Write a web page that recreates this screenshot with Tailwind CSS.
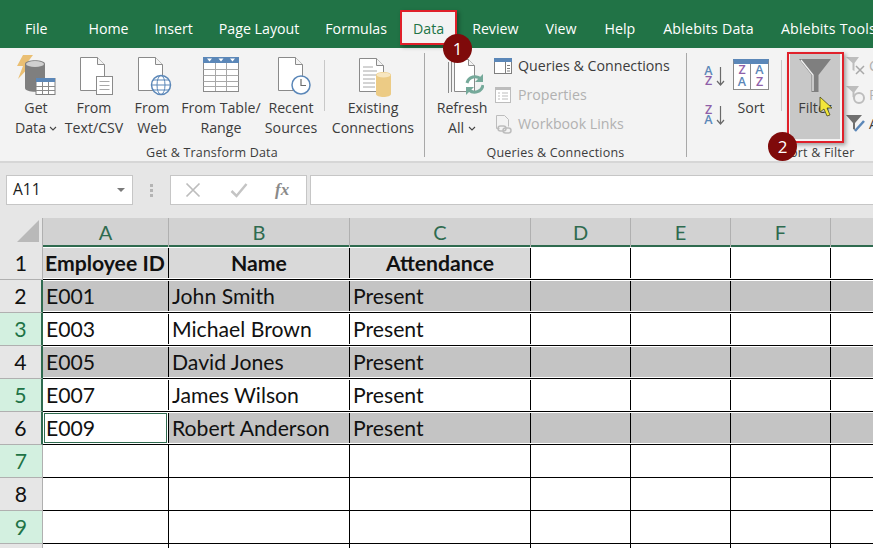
<!DOCTYPE html>
<html lang="en">
<head>
<meta charset="UTF-8">
<title>Excel Data Filter</title>
<script src="https://cdn.jsdelivr.net/npm/@tailwindcss/browser@4"></script>
</head>
<body class="bg-white">
<div class="relative w-[873px] h-[548px] overflow-hidden font-['Open_Sans',sans-serif] text-[#3c3c3c]">

  <!-- tabs -->
  <div class="h-[48px] bg-[#217346] text-white text-[14.2px] flex items-center pt-[9px] whitespace-nowrap">
    <span class="ml-[25px] mr-[41px]">File</span>
    <div class="flex gap-[26px]">
      <span>Home</span>
      <span>Insert</span>
      <span>Page Layout</span>
      <span>Formulas</span>
      <span class="relative text-[#217346]">
        <span class="absolute -left-[13px] -right-[13px] -top-[8px] h-[35px] bg-[#f3f3f3] border-[2.5px] border-[#e0202a] shadow-[2px_2px_4px_rgba(0,0,0,0.35)]"></span>
        <span class="relative">Data</span>
      </span>
      <span class="ml-[2px]">Review</span>
      <span class="ml-[1px]">View</span>
      <span class="ml-[2px]">Help</span>
      <span class="ml-[2px] tracking-[0.2px]">Ablebits Data</span>
      <span class="ml-[1px] tracking-[0.2px]">Ablebits Tools</span>
    </div>
  </div>

  <!-- ribbon -->
  <div class="h-[115px] bg-[#f3f3f3] border-b-2 border-[#d6d6d6] flex text-[14.2px] leading-[20px] whitespace-nowrap">

    <!-- get & transform -->
    <div class="w-[425px] shrink-0 h-[104px] mt-[5px] border-r border-[#a8a8a8] flex flex-col">
      <div class="h-[93px] shrink-0 pl-[7px] flex">
        <div class="w-[58px] flex flex-col items-center">
          <svg class="h-[45px] w-[44px]" viewBox="0 0 44 45">
            <path d="M9 2h10l-6 8h6L4 26l5-13H3z" fill="#eabf73"/>
            <path d="M11 11c0-5 20-5 20 0v24c0 5-20 5-20 0z" fill="#7f7f7f"/>
            <ellipse cx="21" cy="11" rx="9" ry="3" fill="#d0d0d0"/>
            <rect x="22" y="25.500" width="19" height="16" fill="#fff" stroke="#7f7f7f"/>
            <rect x="22" y="25" width="19" height="4" fill="#5b87b8"/>
            <path d="M22 33.500h19M22 37.500h19M28.500 29v12M34.500 29v12" stroke="#8a8a8a"/>
          </svg>
          <span>Get</span>
          <span class="flex items-center gap-[3px]">Data
            <svg class="w-[8px] h-[5px]" viewBox="0 0 8 5"><path d="M1 1l3 3 3-3" fill="none" stroke="#444" stroke-width="1.100"/></svg>
          </span>
        </div>
        <div class="w-[58px] flex flex-col items-center">
          <svg class="h-[45px] w-[44px]" viewBox="0 0 44 45">
            <path d="M8.500 4.500h17l7 7v26h-24z" fill="#fff" stroke="#8a8a8a"/>
            <path d="M25.500 4.500v7h7" fill="#f3f3f3" stroke="#8a8a8a"/>
            <rect x="24.500" y="23.500" width="16" height="18" fill="#fff" stroke="#8a8a8a"/>
            <path d="M27.500 28.500h10M27.500 32.500h10M27.500 36.500h10" stroke="#a8a8a8"/>
          </svg>
          <span>From</span>
          <span>Text/CSV</span>
        </div>
        <div class="w-[58px] flex flex-col items-center">
          <svg class="h-[45px] w-[44px]" viewBox="0 0 44 45">
            <path d="M8.500 4.500h17l7 7v26h-24z" fill="#fff" stroke="#8a8a8a"/>
            <path d="M25.500 4.500v7h7" fill="#f3f3f3" stroke="#8a8a8a"/>
            <circle cx="31" cy="32" r="9.500" fill="#fff" stroke="#5b87b8" stroke-width="1.500"/>
            <ellipse cx="31" cy="32" rx="4" ry="9.500" fill="none" stroke="#5b87b8"/>
            <path d="M21.500 32h19M23 27h16M23 37h16" stroke="#5b87b8"/>
          </svg>
          <span>From</span>
          <span>Web</span>
        </div>
        <div class="w-[80px] flex flex-col items-center">
          <svg class="h-[45px] w-[44px]" viewBox="0 0 44 45">
            <rect x="4.500" y="4.500" width="35" height="34" fill="#fff" stroke="#8a8a8a"/>
            <rect x="4" y="4" width="36" height="6" fill="#5b87b8"/>
            <path d="M4.500 16.500h35M4.500 22.500h35M4.500 28.500h35M4.500 33.500h35M16.500 10v28M27.500 10v28" stroke="#a8a8a8"/>
            <path d="M8 5.500h5l-2.500 3zM19.500 5.500h5l-2.500 3zM31 5.500h5l-2.500 3z" fill="#fff"/>
          </svg>
          <span>From Table/</span>
          <span>Range</span>
        </div>
        <div class="w-[60px] flex flex-col items-center">
          <svg class="h-[45px] w-[44px]" viewBox="0 0 44 45">
            <path d="M9.500 4.500h17l7 7v26h-24z" fill="#fff" stroke="#8a8a8a"/>
            <path d="M26.500 4.500v7h7" fill="#f3f3f3" stroke="#8a8a8a"/>
            <circle cx="32" cy="32" r="9" fill="#fff" stroke="#5b87b8" stroke-width="1.500"/>
            <path d="M32 26v6.500h5" fill="none" stroke="#6a6a6a" stroke-width="1.200"/>
          </svg>
          <span>Recent</span>
          <span>Sources</span>
        </div>
        <div class="w-px h-[51px] mt-[7px] ml-[3px] mr-[2px] bg-[#c8c8c8]"></div>
        <div class="w-[92px] flex flex-col items-center">
          <svg class="h-[45px] w-[44px]" viewBox="0 0 44 45">
            <path d="M8.500 5.500h17l7 7v26h-24z" fill="#fff" stroke="#8a8a8a"/>
            <path d="M25.500 5.500v7h7" fill="#f3f3f3" stroke="#8a8a8a"/>
            <path d="M12 14h10M12 18h14M12 22h14M12 26h12M12 30h12M12 34h12" stroke="#a8a8a8"/>
            <path d="M25 22c0-4 15-4 15 0v19c0 4-15 4-15 0z" fill="#eccb85"/>
            <ellipse cx="32.500" cy="22" rx="7" ry="2.500" fill="#f7e6c0"/>
          </svg>
          <span>Existing</span>
          <span>Connections</span>
        </div>
      </div>
      <div class="shrink-0 text-[12.5px] leading-[14px] text-center tracking-[0.2px]">Get &amp; Transform Data</div>
    </div>

    <!-- queries -->
    <div class="w-[262px] shrink-0 h-[104px] mt-[5px] border-r border-[#a8a8a8] flex flex-col">
      <div class="h-[93px] shrink-0 pl-[10px] flex">
        <div class="w-[54px] flex flex-col items-center">
          <svg class="h-[45px] w-[44px]" viewBox="0 0 44 45">
            <path d="M8.500 9v31M11.500 8v31" stroke="#8a8a8a" fill="none"/>
            <path d="M14.500 6.500h14l6 6v26h-20z" fill="#fff" stroke="#8a8a8a"/>
            <path d="M28.500 6.500v6h6" fill="#f3f3f3" stroke="#8a8a8a"/>
            <path d="M27 30a8.500 8.500 0 0 1 14-4" fill="none" stroke="#75a99a" stroke-width="3"/>
            <path d="M43 32a8.500 8.500 0 0 1-14 5" fill="none" stroke="#75a99a" stroke-width="3"/>
            <path d="M43 21v8h-8zM26 42v-8h8z" fill="#75a99a"/>
          </svg>
          <span>Refresh</span>
          <span class="flex items-center gap-[4px]">All
            <svg class="w-[8px] h-[5px]" viewBox="0 0 8 5"><path d="M1 1l3 3 3-3" fill="none" stroke="#444" stroke-width="1.100"/></svg>
          </span>
        </div>
        <div class="flex flex-col ml-[4px] mt-[3px] gap-[9px]">
          <div class="flex items-center gap-[5px] h-[20px]">
            <svg class="w-[20px] h-[20px]" viewBox="0 0 20 20">
              <rect x="1.500" y="2.500" width="17" height="15" fill="#fff" stroke="#7f7f7f"/>
              <rect x="1" y="2" width="18" height="4" fill="#5b87b8"/>
              <path d="M12.500 6v11M14 9.500h3M14 12.500h3M14 15h3" stroke="#7f7f7f"/>
            </svg>
            <span>Queries &amp; Connections</span>
          </div>
          <div class="flex items-center gap-[5px] h-[20px] text-[#b1b1b1]">
            <svg class="w-[20px] h-[20px]" viewBox="0 0 20 20">
              <rect x="2.500" y="2.500" width="15" height="15" fill="#fff" stroke="#bdbdbd"/>
              <rect x="2" y="2" width="16" height="3" fill="#bdbdbd"/>
              <path d="M5 8h2M9 8h6M5 11h2M9 11h6M5 14h2M9 14h6" stroke="#bdbdbd"/>
            </svg>
            <span>Properties</span>
          </div>
          <div class="flex items-center gap-[5px] h-[20px] text-[#b1b1b1]">
            <svg class="w-[20px] h-[20px]" viewBox="0 0 20 20">
              <path d="M3.500 1.500h8l4 4v7M3.500 1.500v13h3" fill="none" stroke="#bdbdbd"/>
              <rect x="5" y="12" width="8" height="5" rx="2.500" fill="none" stroke="#bdbdbd" stroke-width="1.500"/>
              <rect x="10" y="14" width="8" height="5" rx="2.500" fill="none" stroke="#bdbdbd" stroke-width="1.500"/>
            </svg>
            <span>Workbook Links</span>
          </div>
        </div>
      </div>
      <div class="shrink-0 text-[12.5px] leading-[14px] text-center tracking-[0.2px]">Queries &amp; Connections</div>
    </div>

    <!-- sort & filter -->
    <div class="w-[186px] shrink-0 h-[104px] mt-[5px] flex flex-col">
      <div class="h-[93px] shrink-0 flex">
        <div class="w-[44px] shrink-0 pl-[16px] pt-[12px] flex flex-col gap-[18px]">
          <div class="flex items-center gap-[2px] h-[21px]">
            <div class="flex flex-col items-center text-[12.5px] leading-[10px] font-semibold w-[11px]">
              <span class="text-[#5b87b8]">A</span>
              <span class="text-[#8f5fa8]">Z</span>
            </div>
            <svg class="w-[9px] h-[20px]" viewBox="0 0 9 20"><path d="M4.500 1v18M1 15l3.500 4 3.500-4" fill="none" stroke="#6a6a6a" stroke-width="1.200"/></svg>
          </div>
          <div class="flex items-center gap-[2px] h-[21px]">
            <div class="flex flex-col items-center text-[12.5px] leading-[10px] font-semibold w-[11px]">
              <span class="text-[#8f5fa8]">Z</span>
              <span class="text-[#5b87b8]">A</span>
            </div>
            <svg class="w-[9px] h-[20px]" viewBox="0 0 9 20"><path d="M4.500 1v18M1 15l3.500 4 3.500-4" fill="none" stroke="#6a6a6a" stroke-width="1.200"/></svg>
          </div>
        </div>
        <div class="w-[40px] shrink-0 flex flex-col items-center">
          <div class="mt-[6px] mb-[8px] w-[36px] h-[31px] bg-white border border-[#8a8a8a] border-t-[5px] border-t-[#5b87b8] grid grid-cols-2 text-[12.5px] leading-[12px] text-center font-semibold">
            <div class="border-r border-[#8a8a8a] flex flex-col">
              <span class="text-[#8f5fa8]">Z</span>
              <span class="text-[#5b87b8]">A</span>
            </div>
            <div class="flex flex-col">
              <span class="text-[#5b87b8]">A</span>
              <span class="text-[#8f5fa8]">Z</span>
            </div>
          </div>
          <span>Sort</span>
        </div>
        <div class="w-px shrink-0 h-[51px] mt-[7px] ml-[10px] mr-[8px] bg-[#c8c8c8]"></div>
        <div class="w-[50px] shrink-0 h-[85px] mt-[1px] bg-[#c8c8c8] flex flex-col items-center">
          <svg class="h-[44px] w-[44px] shrink-0" viewBox="0 0 44 44">
            <path d="M6 5h32L25.500 21v17h-7V21z" fill="#7f7f7f"/>
            <path d="M8 6l12 15v16" fill="none" stroke="#f0f0f0" stroke-width="1.300"/>
          </svg>
          <span>Filter</span>
        </div>
        <div class="ml-[5px] mt-[2px] flex flex-col gap-[8px] text-[#b1b1b1]">
          <div class="flex items-center gap-[3px] h-[21px]">
            <svg class="w-[21px] h-[21px] shrink-0" viewBox="0 0 21 21">
              <path d="M1 2h13L9.500 8v8l-2-1V8z" fill="#bdbdbd"/>
              <path d="M11 11l8 8M19 11l-8 8" stroke="#a8a8a8" stroke-width="1.500"/>
            </svg>
            <span>C</span>
          </div>
          <div class="flex items-center gap-[3px] h-[21px]">
            <svg class="w-[21px] h-[21px] shrink-0" viewBox="0 0 21 21">
              <path d="M1 2h13L9.500 8v6l-2-1V8z" fill="#bdbdbd"/>
              <circle cx="14" cy="14" r="5" fill="none" stroke="#bdbdbd" stroke-width="2"/>
            </svg>
            <span>R</span>
          </div>
          <div class="flex items-center gap-[3px] h-[21px] text-[#3c3c3c]">
            <svg class="w-[21px] h-[21px] shrink-0" viewBox="0 0 21 21">
              <path d="M1 2h16L10 10v7l-2-1v-6z" fill="#6f6f6f"/>
              <path d="M10 18L19 8" stroke="#5b87b8" stroke-width="2.500"/>
            </svg>
            <span>A</span>
          </div>
        </div>
      </div>
      <div class="shrink-0 text-[12.5px] leading-[14px] tracking-[0.2px] pl-[96px]">Sort &amp; Filter</div>
    </div>
  </div>

  <!-- formula bar -->
  <div class="h-[55px] bg-[#e6e6e6] flex items-start pt-[12px]">
    <div class="ml-[6px] w-[127px] h-[30px] bg-white border border-[#c6c6c6] flex items-center justify-between pl-[6px] pr-[7px] text-[15.5px] text-[#1a1a1a]">
      <span>A11</span>
      <span class="w-0 h-0 border-x-[4px] border-x-transparent border-t-[4px] border-t-[#7a7a7a]"></span>
    </div>
    <div class="w-[37px] h-[30px] flex flex-col items-center justify-center gap-[2px]">
      <span class="w-[3px] h-[3px] bg-[#b4b4b4]"></span>
      <span class="w-[3px] h-[3px] bg-[#b4b4b4]"></span>
      <span class="w-[3px] h-[3px] bg-[#b4b4b4]"></span>
    </div>
    <div class="w-[137px] h-[30px] bg-white border border-[#c6c6c6] flex items-center">
      <svg class="ml-[14px] w-[16px] h-[16px]" viewBox="0 0 16 16"><path d="M1.500 1.500l13 13M14.500 1.500l-13 13" stroke="#bdbdbd" stroke-width="1.700"/></svg>
      <svg class="ml-[29px] w-[18px] h-[16px]" viewBox="0 0 18 16"><path d="M1.500 9l5 5L16.500 2" fill="none" stroke="#c4c4c4" stroke-width="2.500"/></svg>
      <span class="ml-[27px] font-['Liberation_Serif',serif] italic font-bold text-[17px] text-[#8a8a8a]">fx</span>
    </div>
    <div class="ml-[3px] flex-1 h-[30px] bg-white border-y border-l border-[#c6c6c6]"></div>
  </div>

  <!-- sheet -->
  <div class="font-['Lato',sans-serif] text-[21.2px] leading-[30px] text-[#111]">
    <div class="flex h-[29px]">
      <div class="w-[43px] bg-[#e6e6e6] border-r border-[#b0b0b0] flex items-end justify-end pr-[3px] pb-[5px]">
        <span class="w-0 h-0 border-l-[22px] border-l-transparent border-b-[22px] border-b-[#b9b9b9]"></span>
      </div>
      <div class="flex-1 grid grid-cols-[126px_181px_181px_100px_100px_100px_1fr] bg-[#d2d2d2] border-b-2 border-[#2f6b4f] text-[#2f6b4f] text-center leading-[29px] text-[20px]">
        <div class="border-r border-[#b0b0b0]">A</div>
        <div class="border-r border-[#b0b0b0]">B</div>
        <div class="border-r border-[#b0b0b0]">C</div>
        <div class="border-r border-[#b0b0b0]">D</div>
        <div class="border-r border-[#b0b0b0]">E</div>
        <div class="border-r border-[#b0b0b0]">F</div>
        <div></div>
      </div>
    </div>

    <!-- row 1 -->
    <div class="flex h-[33px]">
      <div class="w-[43px] bg-[#e6e6e6] border-r border-b border-[#b0b0b0] text-center leading-[32px]">1</div>
      <div class="flex-1 border-b border-black py-px grid grid-cols-[126px_181px_181px_100px_100px_100px_1fr] font-bold">
        <div class="border-r border-black bg-[#d9d9d9] pl-[2px] whitespace-nowrap overflow-hidden">Employee ID</div>
        <div class="border-r border-black bg-[#d9d9d9] text-center">Name</div>
        <div class="border-r border-black bg-[#d9d9d9] text-center">Attendance</div>
        <div class="border-r border-black"></div>
        <div class="border-r border-black"></div>
        <div class="border-r border-black"></div>
        <div></div>
      </div>
    </div>

    <!-- row 2 -->
    <div class="flex h-[33px]">
      <div class="w-[43px] bg-[#e6e6e6] border-r-2 border-b border-r-[#2f6b4f] border-b-[#b0b0b0] text-center leading-[32px]">2</div>
      <div class="flex-1 border-b border-black py-px grid grid-cols-[126px_181px_181px_100px_100px_100px_1fr] bg-white">
        <div class="border-r border-black bg-[#c4c4c4] pl-[3px]">E001</div>
        <div class="border-r border-black bg-[#c4c4c4] pl-[3px]">John Smith</div>
        <div class="border-r border-black bg-[#c4c4c4] pl-[3px]">Present</div>
        <div class="border-r border-black bg-[#c4c4c4]"></div>
        <div class="border-r border-black bg-[#c4c4c4]"></div>
        <div class="border-r border-black bg-[#c4c4c4]"></div>
        <div class="bg-[#c4c4c4]"></div>
      </div>
    </div>

    <!-- row 3 -->
    <div class="flex h-[33px]">
      <div class="w-[43px] bg-[#d3f0e0] border-r-2 border-b border-r-[#2f6b4f] border-b-[#b0b0b0] text-center leading-[32px] text-[#217346]">3</div>
      <div class="flex-1 border-b border-black py-px grid grid-cols-[126px_181px_181px_100px_100px_100px_1fr]">
        <div class="border-r border-black pl-[3px]">E003</div>
        <div class="border-r border-black pl-[3px]">Michael Brown</div>
        <div class="border-r border-black pl-[3px]">Present</div>
        <div class="border-r border-black"></div>
        <div class="border-r border-black"></div>
        <div class="border-r border-black"></div>
        <div></div>
      </div>
    </div>

    <!-- row 4 -->
    <div class="flex h-[33px]">
      <div class="w-[43px] bg-[#e6e6e6] border-r-2 border-b border-r-[#2f6b4f] border-b-[#b0b0b0] text-center leading-[32px]">4</div>
      <div class="flex-1 border-b border-black py-px grid grid-cols-[126px_181px_181px_100px_100px_100px_1fr] bg-white">
        <div class="border-r border-black bg-[#c4c4c4] pl-[3px]">E005</div>
        <div class="border-r border-black bg-[#c4c4c4] pl-[3px]">David Jones</div>
        <div class="border-r border-black bg-[#c4c4c4] pl-[3px]">Present</div>
        <div class="border-r border-black bg-[#c4c4c4]"></div>
        <div class="border-r border-black bg-[#c4c4c4]"></div>
        <div class="border-r border-black bg-[#c4c4c4]"></div>
        <div class="bg-[#c4c4c4]"></div>
      </div>
    </div>

    <!-- row 5 -->
    <div class="flex h-[33px]">
      <div class="w-[43px] bg-[#d3f0e0] border-r-2 border-b border-r-[#2f6b4f] border-b-[#b0b0b0] text-center leading-[32px] text-[#217346]">5</div>
      <div class="flex-1 border-b border-black py-px grid grid-cols-[126px_181px_181px_100px_100px_100px_1fr]">
        <div class="border-r border-black pl-[3px]">E007</div>
        <div class="border-r border-black pl-[3px]">James Wilson</div>
        <div class="border-r border-black pl-[3px]">Present</div>
        <div class="border-r border-black"></div>
        <div class="border-r border-black"></div>
        <div class="border-r border-black"></div>
        <div></div>
      </div>
    </div>

    <!-- row 6, A6 is the active cell -->
    <div class="flex h-[33px]">
      <div class="w-[43px] bg-[#e6e6e6] border-r-2 border-b border-r-[#2f6b4f] border-b-[#b0b0b0] text-center leading-[32px]">6</div>
      <div class="flex-1 border-b border-black py-px grid grid-cols-[126px_181px_181px_100px_100px_100px_1fr] bg-white">
        <div class="border-r border-black"><div class="h-full ml-px mr-px border border-[#2f6b4f] pl-px leading-[28px]">E009</div></div>
        <div class="border-r border-black bg-[#c4c4c4] pl-[3px]">Robert Anderson</div>
        <div class="border-r border-black bg-[#c4c4c4] pl-[3px]">Present</div>
        <div class="border-r border-black bg-[#c4c4c4]"></div>
        <div class="border-r border-black bg-[#c4c4c4]"></div>
        <div class="border-r border-black bg-[#c4c4c4]"></div>
        <div class="bg-[#c4c4c4]"></div>
      </div>
    </div>

    <!-- rows 7-10 -->
    <div class="flex h-[33px]">
      <div class="w-[43px] bg-[#d3f0e0] border-r border-b border-[#b0b0b0] text-center leading-[32px] text-[#217346]">7</div>
      <div class="flex-1 border-b border-black grid grid-cols-[126px_181px_181px_100px_100px_100px_1fr]">
        <div class="border-r border-black"></div><div class="border-r border-black"></div><div class="border-r border-black"></div><div class="border-r border-black"></div><div class="border-r border-black"></div><div class="border-r border-black"></div><div></div>
      </div>
    </div>
    <div class="flex h-[33px]">
      <div class="w-[43px] bg-[#e6e6e6] border-r border-b border-[#b0b0b0] text-center leading-[32px]">8</div>
      <div class="flex-1 border-b border-black grid grid-cols-[126px_181px_181px_100px_100px_100px_1fr]">
        <div class="border-r border-black"></div><div class="border-r border-black"></div><div class="border-r border-black"></div><div class="border-r border-black"></div><div class="border-r border-black"></div><div class="border-r border-black"></div><div></div>
      </div>
    </div>
    <div class="flex h-[33px]">
      <div class="w-[43px] bg-[#d3f0e0] border-r border-b border-[#b0b0b0] text-center leading-[32px] text-[#217346]">9</div>
      <div class="flex-1 border-b border-black grid grid-cols-[126px_181px_181px_100px_100px_100px_1fr]">
        <div class="border-r border-black"></div><div class="border-r border-black"></div><div class="border-r border-black"></div><div class="border-r border-black"></div><div class="border-r border-black"></div><div class="border-r border-black"></div><div></div>
      </div>
    </div>
    <div class="flex h-[33px]">
      <div class="w-[43px] bg-[#e6e6e6] border-r border-[#b0b0b0]"></div>
      <div class="flex-1 grid grid-cols-[126px_181px_181px_100px_100px_100px_1fr]">
        <div class="border-r border-black"></div><div class="border-r border-black"></div><div class="border-r border-black"></div><div class="border-r border-black"></div><div class="border-r border-black"></div><div class="border-r border-black"></div><div></div>
      </div>
    </div>
  </div>

  <!-- annotations on top of the screenshot -->
  <div class="absolute left-[443px] top-[34px] w-[29px] h-[29px] rounded-full bg-[#7f0a0a] text-white text-[17px] flex items-center justify-center">1</div>

  <div class="absolute left-[787px] top-[52px] w-[57px] h-[91px] border-[2.5px] border-[#e0202a] shadow-[2px_2px_4px_rgba(0,0,0,0.35)]"></div>
  <div class="absolute left-[768px] top-[132px] w-[29px] h-[29px] rounded-full bg-[#7f0a0a] text-white text-[17px] flex items-center justify-center">2</div>

  <svg class="absolute left-[819px] top-[96px] w-[15px] h-[21px]" viewBox="0 0 15 21">
    <path d="M1 1v15l4-3 3 7 3-1-3-7h5z" fill="#f2e63a" stroke="#4a4a20" stroke-width="0.800"/>
  </svg>
</div>
</body>
</html>
